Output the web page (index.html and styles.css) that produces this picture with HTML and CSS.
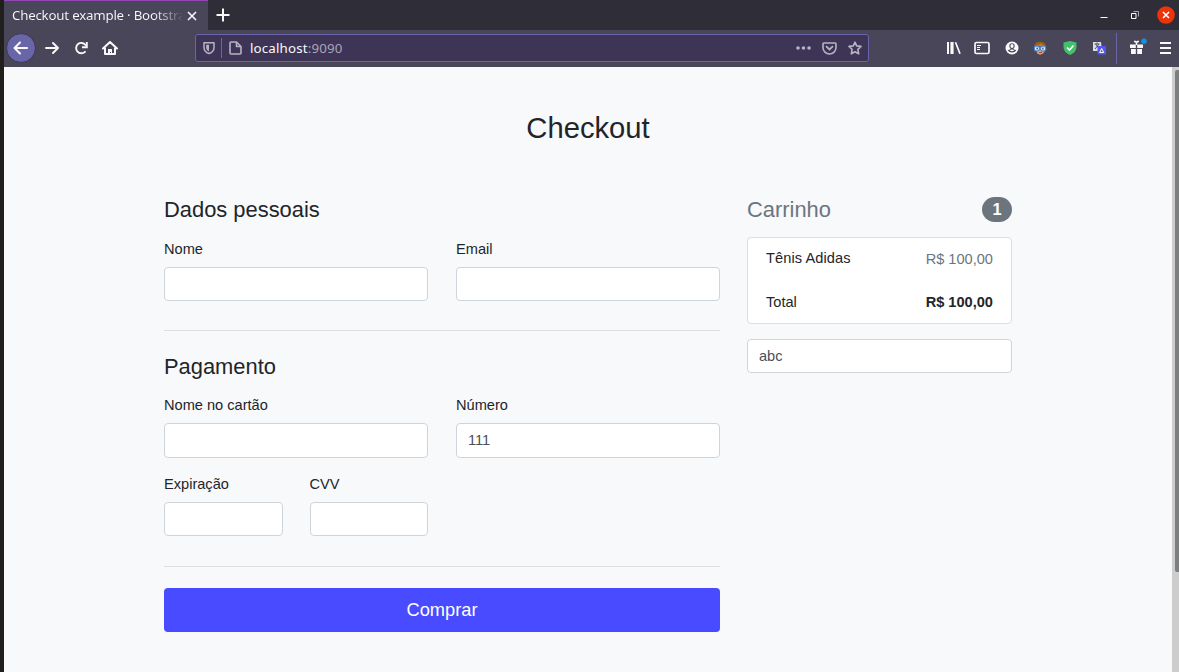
FILE: index.html
```html
<!DOCTYPE html>
<html lang="pt-BR">
<head>
<meta charset="utf-8">
<title>Checkout example</title>
<link rel="stylesheet" href="styles.css">
</head>
<body>
<div class="window">
  <header class="tabs">
    <div class="tab"><span class="tab-title">Checkout example · Bootstra</span>
      <svg class="tab-close" width="10" height="10" viewBox="0 0 10 10"><path d="M1 1l8 8M9 1l-8 8" stroke="#f9f9fa" stroke-width="1.6"/></svg>
    </div>
    <svg class="new-tab" width="14" height="14" viewBox="0 0 14 14"><path d="M7 .5v13M.5 7h13" stroke="#f9f9fa" stroke-width="2"/></svg>
    <div class="controls">
      <svg width="8" height="20" viewBox="0 0 8 20"><path d="M.5 12.5h7" stroke="#fff"/></svg>
      <svg width="8" height="20" viewBox="0 0 8 20"><path d="M2.500 6.500h5v5" stroke="#aaa9ae" fill="none"/><path d="M.5 8.500h4.500v5H.5z" stroke="#fff" fill="none"/></svg>
      <svg width="18" height="18" viewBox="0 0 18 18"><circle cx="9" cy="9" r="8.800" fill="#ec3309"/><path d="M6 6l6 6M12 6l-6 6" stroke="#fff" stroke-width="1.600"/></svg>
    </div>
  </header>
  <nav class="toolbar">
    <svg class="back" width="30" height="30" viewBox="0 0 30 30"><circle cx="15" cy="15" r="14.500" fill="#6866a8" stroke="#3c3850"/><path d="M21 15H9M14 9.500L8.500 15l5.500 5.500" fill="none" stroke="#f9f9fa" stroke-width="2" stroke-linecap="round" stroke-linejoin="round"/></svg>
    <svg class="forward" width="14" height="14" viewBox="0 0 14 14"><path d="M1 7h12M8 2l5 5-5 5" fill="none" stroke="#f9f9fa" stroke-width="1.900" stroke-linecap="round" stroke-linejoin="round"/></svg>
    <svg class="reload" width="14" height="14" viewBox="0 0 14 14"><path d="M11.500 4A5.200 5.200 0 1 0 11 10.800" fill="none" stroke="#f9f9fa" stroke-width="1.900" stroke-linecap="round"/><path d="M12.800 1v5.200H8" fill="none" stroke="#f9f9fa" stroke-width="1.900"/></svg>
    <svg class="home" width="16" height="14" viewBox="0 0 16 14"><path d="M1 7.500L8 1l7 6.500M3 7v6h10V7" fill="none" stroke="#f9f9fa" stroke-width="2" stroke-linecap="round" stroke-linejoin="round"/><path d="M6 13V8h4v5H9v-2H8v2z" fill="#f9f9fa"/></svg>
    <div class="address">
      <svg class="shield" width="12" height="14" viewBox="0 0 12 14"><path d="M1 1.800h10v4.400C11 9.500 9 11.500 6 12.500 3 11.500 1 9.500 1 6.200z" fill="none" stroke="#b7b3c4" stroke-width="1.500" stroke-linejoin="round"/><path d="M6 3.700H3.200v2.700c0 2 1 3.200 2.800 4.100z" fill="#b7b3c4"/></svg>
      <i class="address-divider"></i>
      <svg class="page-icon" width="13" height="14" viewBox="0 0 13 14"><path d="M2 1h5.500L12 5.500V12a1 1 0 0 1-1 1H2a1 1 0 0 1-1-1V2a1 1 0 0 1 1-1zM7.500 1v4.500H12" fill="none" stroke="#b7b3c4" stroke-width="1.600" stroke-linejoin="round"/></svg>
      <span class="url">localhost<span class="port">:9090</span></span>
      <svg class="dots" width="15" height="4" viewBox="0 0 15 4"><g fill="#b7b3c4"><circle cx="2" cy="2" r="1.800"/><circle cx="7.500" cy="2" r="1.800"/><circle cx="13" cy="2" r="1.800"/></g></svg>
      <svg class="pocket" width="15" height="13" viewBox="0 0 15 13"><path d="M1.800 1h11.400a.8.8 0 0 1 .8.800V5.500a6.500 6.500 0 0 1-13 0V1.800a.8.800 0 0 1 .8-.8z" fill="none" stroke="#b7b3c4" stroke-width="1.600"/><path d="M4.500 4.700l3 2.800 3-2.800" fill="none" stroke="#b7b3c4" stroke-width="1.800" stroke-linecap="round"/></svg>
      <svg class="star" width="14" height="14" viewBox="0 0 14 14"><path d="M7 1.200l1.700 3.700 4.300.5-3.100 2.900.8 4.500L7 10.700l-3.700 2.100.8-4.500L1 5.400l4.300-.5z" fill="none" stroke="#b7b3c4" stroke-width="1.600" stroke-linejoin="round"/></svg>
    </div>
    <div class="tools">
      <svg width="15" height="14" viewBox="0 0 15 14"><path d="M1 1h2v12H1zM4.400 1h3.200v12H4.400z" fill="#f9f9fa"/><path d="M9.500 1.300l4.500 11.400" stroke="#f9f9fa" stroke-width="1.700"/></svg>
      <svg width="16" height="14" viewBox="0 0 16 14"><rect x="1" y="1.500" width="14" height="11" rx="1.500" fill="none" stroke="#f9f9fa" stroke-width="1.700"/><path d="M3 4.500h4M3 6.500h3M3 8.500h3" stroke="#f9f9fa"/></svg>
      <svg width="14" height="14" viewBox="0 0 14 14"><circle cx="7" cy="7" r="6.500" fill="#f9f9fa"/><path d="M4.300 5a2.700 2.700 0 0 1 5.400 0c0 1.200-.6 2-1.200 2.500v.8l2.800 1C10.200 10.800 8.700 11.500 7 11.500s-3.200-.7-4.300-2.200l2.800-1v-.8C4.900 7 4.300 6.200 4.300 5z" fill="#4a4659"/><ellipse cx="7" cy="5" rx="1.600" ry="2" fill="#f9f9fa"/><path d="M4.500 9.500L7 8.200l2.500 1.300L7 10.200z" fill="#f9f9fa"/></svg>
      <svg width="14" height="14" viewBox="0 0 14 14"><path d="M3.500 8h7.500l1 2-2 2.500-3 1.300-3-1.500z" fill="#ef9b6d"/><path d="M1 6.500C1.500 1.500 4 .3 8 .7c4 .3 5.500 3 5 7l-1-1.700L9 4 5 5.500z" fill="#9d5b13"/><path d="M3 4c2.500 0 4-1 5-2 .5 1.500 2.500 2.500 4.500 3L8 5.500z" fill="#bd7d20"/><g fill="#e5f5ff" stroke="#4d85cc" stroke-width="1.100"><circle cx="3.900" cy="7.500" r="2.600"/><circle cx="10.100" cy="7.500" r="2.600"/></g><path d="M3.500 7.500h1.300M9.300 7.500h1.300" stroke="#173e7e" stroke-width="1.800"/><path d="M6 11.500h3" stroke="#a94624"/></svg>
      <svg width="14" height="14" viewBox="0 0 14 14"><path d="M7 0l6.500 1.500v4C13.500 9.500 11 12.500 7 14 3 12.500.5 9.500.5 5.500v-4z" fill="#43c06a"/><path d="M4 6.500l2.500 2.500L10.500 4.500" fill="none" stroke="#fff" stroke-width="1.600"/></svg>
      <svg width="14" height="14" viewBox="0 0 14 14"><path d="M1 1h8l1 9H1z" fill="#dedde0"/><path d="M2.500 3h5M5 1.500V3M3.500 3l4 5M7 3L3 8" stroke="#55535d"/><rect x="5.500" y="5" width="8.500" height="8.500" rx="1" fill="#5555f5"/><path d="M9.700 7.500l2 4h-4z" fill="none" stroke="#fff"/></svg>
    </div>
    <i class="tool-divider"></i>
    <svg class="gift" width="18" height="17" viewBox="0 0 18 17"><path d="M1 6.500h5.800v3.500H1zM8.200 6.500H14V10H8.200zM2 11h4.800v5H2zM8.200 11H13v5H8.200z" fill="#f9f9fa"/><path d="M5 3.500h1.500L7.500 5l1-1.500H10M7.500 5v2" stroke="#f9f9fa" stroke-width="1.500" fill="none"/><circle cx="15" cy="3.300" r="2.700" fill="#0a96ef"/></svg>
    <svg class="menu" width="11" height="12" viewBox="0 0 11 12"><path d="M0 1h11M0 6h11M0 11h11" stroke="#f9f9fa" stroke-width="2"/></svg>
  </nav>
  <div class="viewport">
    <main class="container">
      <h2>Checkout</h2>
      <div class="columns">
        <form class="form">
          <h4>Dados pessoais</h4>
          <div class="row">
            <div class="field"><label>Nome</label><div class="input"></div></div>
            <div class="field"><label>Email</label><div class="input"></div></div>
          </div>
          <div class="rule"></div>
          <h4>Pagamento</h4>
          <div class="row row-card">
            <div class="field"><label>Nome no cartão</label><div class="input"></div></div>
            <div class="field"><label>Número</label><div class="input">111</div></div>
          </div>
          <div class="row row-small">
            <div class="field"><label>Expiração</label><div class="input"></div></div>
            <div class="field"><label>CVV</label><div class="input"></div></div>
          </div>
          <div class="rule rule-last"></div>
          <div class="buy">Comprar</div>
        </form>
        <aside class="cart">
          <h4 class="cart-title"><span>Carrinho</span><span class="badge">1</span></h4>
          <div class="card">
            <div class="item"><span class="product">Tênis Adidas</span><span class="price">R$ 100,00</span></div>
            <div class="item total"><span>Total</span><strong>R$ 100,00</strong></div>
          </div>
          <div class="input promo">abc</div>
        </aside>
      </div>
    </main>
    <div class="scrollbar"><div class="thumb"></div></div>
  </div>
</div>
</body>
</html>
```
FILE: styles.css
```css
* { box-sizing: border-box; }
body { margin: 0; background: #201f1e; overflow: hidden; font-family: "Liberation Sans", Arial, sans-serif; }
svg { display: block; flex: none; }
h2, h4 { margin: 0; font-weight: 400; }
.window { height: 672px; margin-left: 4px; display: flex; flex-direction: column; }
.tabs { height: 30px; background: #2e2d38; display: flex; align-items: center; }
.tab { width: 204px; height: 30px; background: #4a4659; border-top: 1px solid #9147b5; display: flex; align-items: center; padding-left: 8px; }
.tab-title { width: 170px; white-space: nowrap; font: 13.3px/20px "Noto Sans", sans-serif; letter-spacing: -.22px; margin-top: -2px; color: transparent; background: linear-gradient(90deg, #f9f9fa 142px, #4a4659 172px); -webkit-background-clip: text; background-clip: text; }
.tab-close { margin-left: 5px; }
.new-tab { margin-left: 8px; }
.controls { margin-left: auto; margin-right: 4px; display: flex; align-items: center; }
.controls svg:nth-child(2) { margin-left: 23px; }
.controls svg:nth-child(3) { margin-left: 18px; }
.toolbar { height: 37px; background: #4a4659; display: flex; align-items: center; padding-bottom: 1px; }
.back { margin-left: 2px; }
.forward { margin-left: 9px; }
.reload { margin-left: 15px; }
.home { margin-left: 14px; }
.address { width: 674px; height: 28px; margin-left: 77px; background: #3d3456; border: 1px solid #6a64aa; border-radius: 3px; display: flex; align-items: center; padding-left: 7px; }
.address-divider { width: 1px; height: 20px; background: #6a64aa; margin-left: 6px; }
.page-icon { margin-left: 7px; }
.url { font: 13.3px/20px "Noto Sans", sans-serif; letter-spacing: .17px; color: #f9f9fa; margin-left: 8px; }
.port { color: #aaa5b8; }
.dots { margin-left: auto; }
.pocket { margin-left: 11px; }
.star { margin-left: 11px; margin-right: 6px; }
.tools { display: flex; align-items: center; justify-content: space-between; width: 160px; margin-left: 77px; }
.tools svg:nth-child(2), .tools svg:nth-child(3), .tools svg:nth-child(4) { margin-left: -1.500px; margin-right: 1.500px; }
.tool-divider { width: 1px; height: 31px; background: #6a64aa; margin-left: 10px; }
.gift { margin-left: 12px; margin-bottom: 3px; }
.menu { margin-left: 13px; }
.viewport { flex: 1; background: #f8f9fb; display: flex; justify-content: space-between; color: #212529; }
.container { width: 848px; margin-left: 160px; }
h2 { font-size: 29.2px; line-height: 36px; padding-top: 43px; text-align: center; }
.columns { display: flex; justify-content: space-between; padding-top: 50px; }
.form { width: 556px; }
h4 { font-size: 21.9px; line-height: 28px; }
.row { display: flex; gap: 28px; padding-top: 15px; }
.row-card { padding-top: 14px; }
.row-card .input { height: 35px; }
.row-small { width: 264px; gap: 27px; padding-top: 16px; }
.field { flex: 1; font-size: 14.6px; }
.field label { display: block; height: 29px; line-height: 22px; margin-top: -1px; }
.input { height: 34px; background: #fff; border: 1px solid #ced4da; border-radius: 4px; font-size: 14.6px; line-height: 33px; color: #495057; padding-left: 11px; }
.rule { height: 1px; background: #dcdee1; margin: 29px 0 22px; }
.rule-last { margin: 30px 0 21px; }
.buy { height: 44px; background: #484bff; border-radius: 4px; color: #fff; font-size: 18.25px; line-height: 44px; text-align: center; }
.cart { width: 265px; }
.cart-title { display: flex; justify-content: space-between; color: #6c757d; }
.badge { width: 30px; height: 25px; border-radius: 13px; background: #6c757d; color: #fff; font-size: 16.4px; font-weight: 700; line-height: 25px; text-align: center; margin-top: 1px; }
.card { height: 87px; margin-top: 13px; background: #fff; border: 1px solid #dcdddf; border-radius: 4px; padding: 10px 18px; font-size: 14.6px; line-height: 22px; }
.item { display: flex; justify-content: space-between; }
.product { margin-top: -1px; letter-spacing: .08px; }
.price { color: #6c757d; }
.total { margin-top: 21px; }
.promo { margin-top: 15px; }
.scrollbar { width: 7px; background: #cdcdcd; padding: 3px 0 0 3px; }
.thumb { width: 4px; height: 502px; background: #7b7f80; border-radius: 2px 0 0 2px; }
```
